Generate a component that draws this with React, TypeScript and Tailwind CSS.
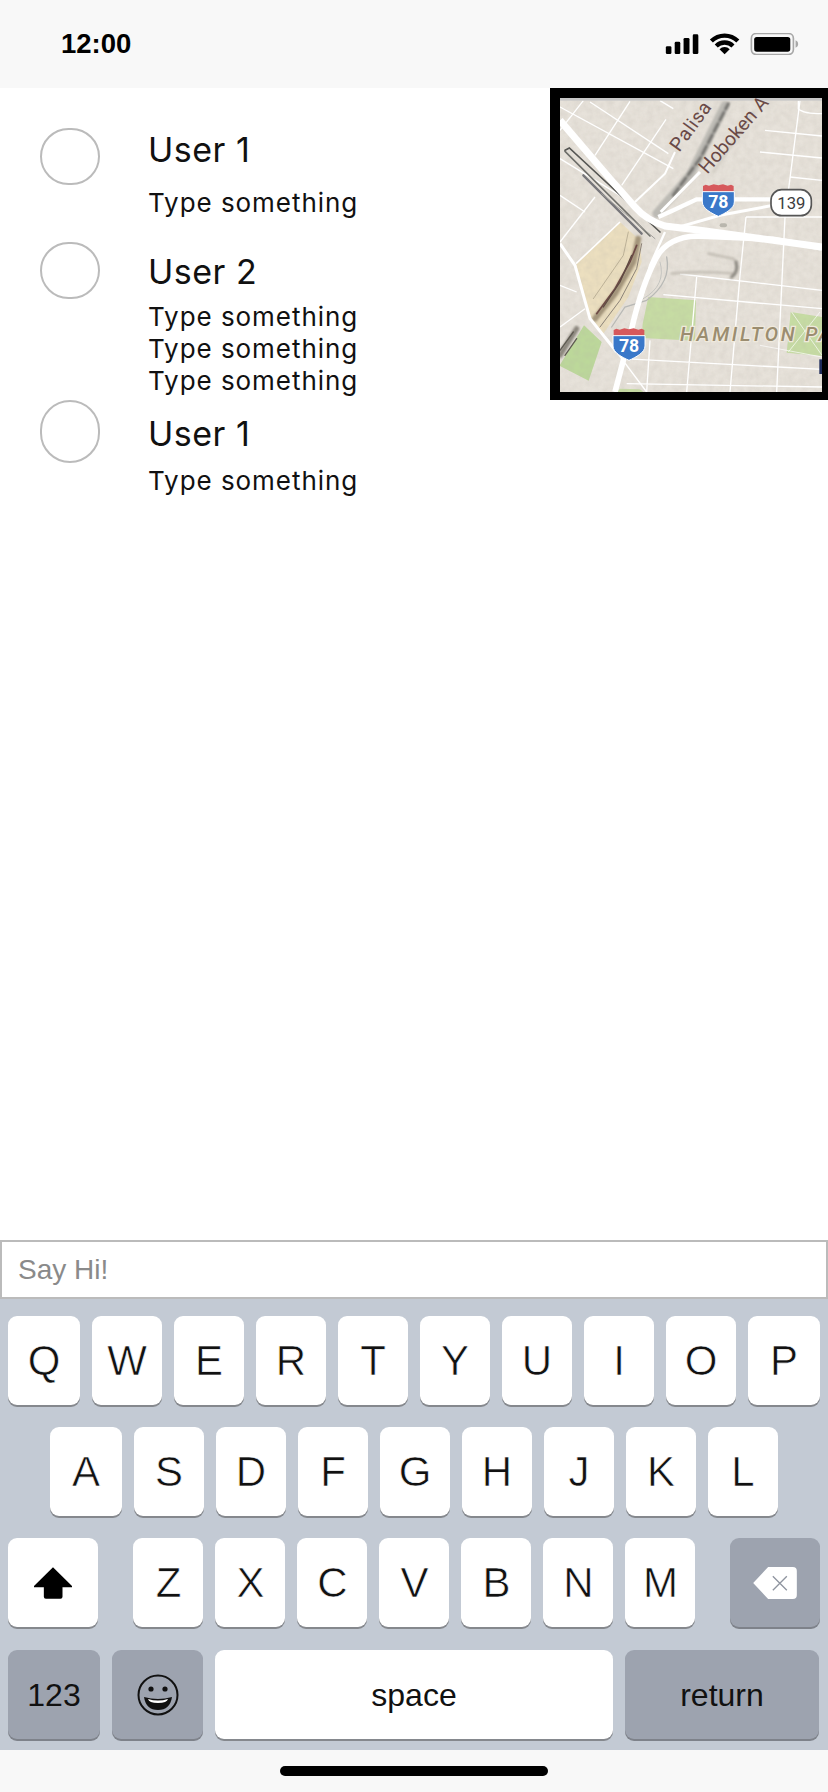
const sans = "font-['Liberation_Sans',Arial,sans-serif]";

const rows = [
  { name: "User 1", lines: 1, circle: "h-[57px]", pad: "pt-0", gap: "mt-[15px]", end: "h-[114px]" },
  { name: "User 2", lines: 3, circle: "h-[57px]", pad: "pt-[8px]", gap: "mt-[7px]", end: "h-[158px]" },
  { name: "User 1", lines: 1, circle: "h-[63px]", pad: "pt-[12px]", gap: "mt-[9px]", end: "h-[110px]" },
];

const StatusIcons = () => (
  <svg width="134" height="22" viewBox="373 98 403 67">
    <rect x="373" y="138" width="17" height="24" rx="4" fill="#000" />
    <rect x="400" y="125" width="17" height="37" rx="4" fill="#000" />
    <rect x="427" y="113" width="18" height="49" rx="4" fill="#000" />
    <rect x="455" y="102" width="17" height="60" rx="4" fill="#000" />
    <path d="M511.7 122.7A57 57 0 0 1 592.3 122.7" fill="none" stroke="#000" strokeWidth="13" />
    <path d="M526.5 137.5A36 36 0 0 1 577.5 137.5" fill="none" stroke="#000" strokeWidth="13" />
    <path d="M552 163L536.4 147.4A22 22 0 0 1 567.6 147.4Z" fill="#000" />
    <rect x="633.5" y="99.5" width="128" height="64" rx="15" fill="none" stroke="#a8a8a8" strokeWidth="5" />
    <rect x="642" y="110" width="110" height="45" rx="8" fill="#000" />
    <path d="M768 120C774 122 776 127 776 131.500C776 136 774 141 768 143Z" fill="#a8a8a8" />
  </svg>
);

const Shield = ({ x, y }: { x: number; y: number }) => (
  <g transform={`translate(${x} ${y})`}>
    <path d="M-46 -26L-46 -44L-38 -48L-28 -45L-14 -49L0 -46L14 -49L28 -45L38 -48L46 -44L46 -26Z" fill="#d6595c" />
    <path d="M-48 -27H48V4C48 24 20 38 0 47C-20 38 -48 24 -48 4Z" fill="#3a78c9" stroke="#fff" strokeWidth="3" />
    <text x="0" y="21" textAnchor="middle" fontSize="53" fontWeight="700" fill="#fff" fontFamily="Roboto, sans-serif">
      78
    </text>
  </g>
);

const MapArt = () => (
  <svg width="262" height="294" viewBox="60 298 786 882" className="block">
    <defs>
      <filter id="soft" x="-10%" y="-10%" width="120%" height="120%">
        <feGaussianBlur stdDeviation="3" />
      </filter>
      <filter id="soften" x="0" y="0" width="100%" height="100%">
        <feGaussianBlur stdDeviation="1.2" />
      </filter>
      <filter id="grain" x="0" y="0" width="100%" height="100%">
        <feTurbulence type="fractalNoise" baseFrequency="0.05" numOctaves="3" seed="4" />
        <feColorMatrix values="0 0 0 0 0.45 0 0 0 0 0.42 0 0 0 0 0.38 0 0 0 0.3 -0.08" />
      </filter>
    </defs>
    <rect x="60" y="298" width="786" height="882" fill="#e7e2da" />

    <g filter="url(#soften)">
      <path d="M108 795L240 670L300 725L305 790L265 895L190 1005L150 950Z" fill="#ecdfbf" />
      <path d="M325 895L468 905L465 1026L305 1018L308 975Z" fill="#c6dca3" />
      <path d="M752 940L846 955V1072L740 1062Z" fill="#c6dca3" />
      <path d="M60 1098L132 980L185 1030L146 1146L60 1102Z" fill="#bcd89a" />
      <path d="M240 1170L300 1172L310 1180H230Z" fill="#c6dca3" />
      <rect x="60" y="298" width="786" height="882" filter="url(#grain)" />

      <g fill="none" stroke="#fff" strokeWidth="4">
        <path d="M60 325L400 510M150 310L385 465M60 480L240 590M60 590L135 640" />
        <path d="M130 306L60 395M270 308L165 470M378 362L245 560M360 306L400 330" />
        <path d="M165 595L60 730" />
        <path d="M405 460L375 525L285 610" strokeWidth="6" />
        <path d="M675 395L846 412M660 460L846 478M750 535L846 545M775 306V330Q790 345 846 345" />
        <path d="M780 306L735 655L710 1180M618 655H846M618 655L600 830L570 1180" />
        <path d="M470 835L440 1180M420 826L846 875M370 888L846 930M330 1025L320 1180M250 1080L846 1112M260 1155L846 1165" />
        <path d="M60 985L135 930M60 860L110 880M200 1020L320 1180" />
        <path d="M660 1040L846 1075M755 940L846 1070M840 940L745 1060" strokeWidth="2" />
      </g>

      <g fill="none" strokeLinecap="round" filter="url(#soft)">
        <path d="M350 645L450 530L555 320" strokeWidth="26" stroke="#bcbab4" />
        <path d="M400 590L480 480L565 315" strokeWidth="10" stroke="#747370" strokeDasharray="26 12" />
        <path d="M640 340L520 520" strokeWidth="10" stroke="#d5d0c7" />
        <path d="M295 720L280 790L225 885L165 960" strokeWidth="18" stroke="#a3947a" />
        <path d="M60 1070L110 990" strokeWidth="16" stroke="#8c877e" />
        <path d="M395 825Q470 815 585 825Q600 800 580 780L505 765" strokeWidth="8" stroke="#c4bfb6" />
        <path d="M575 835Q596 820 588 790" strokeWidth="10" stroke="#8f8b84" />
      </g>

      <g fill="none" strokeLinecap="round">
        <path d="M75 455L88 448L360 700" strokeWidth="5" stroke="#565653" />
        <path d="M75 458L330 712" strokeWidth="5" stroke="#6f6f6b" />
        <path d="M130 530L305 705" strokeWidth="7" stroke="#77767a" />
        <path d="M185 585L345 720" strokeWidth="3" stroke="#a09f9b" />
        <path d="M290 740L270 790L225 870L170 945" strokeWidth="5" stroke="#6d4a45" />
        <path d="M275 770L240 850L190 925" strokeWidth="4" stroke="#5e4a42" />
        <path d="M305 735L290 810L240 905L180 985" strokeWidth="3" stroke="#8c8378" />
        <path d="M265 700L250 770L160 900" strokeWidth="2" stroke="#a69b84" />
        <path d="M380 775Q395 850 320 905L255 925L215 985" strokeWidth="4" stroke="#b8b9b6" />
        <path d="M360 790Q380 860 310 900" strokeWidth="3" stroke="#c4c4c0" />
        <path d="M60 1055L100 1000M75 1070L110 1020" strokeWidth="4" stroke="#5f5b52" />
        <path d="M545 680H555" strokeWidth="12" stroke="#b9b6ad" />
      </g>

      <g fill="none" stroke="#fff" strokeLinecap="butt">
        <path d="M60 365L210 540L285 625Q320 665 375 682L480 695L846 745" strokeWidth="21" />
        <path d="M225 1180L275 990Q305 860 350 775Q385 715 470 712L700 722L846 748" strokeWidth="17" />
        <path d="M355 655L400 635L470 602H700" strokeWidth="13" />
        <path d="M400 690L540 650L700 620" strokeWidth="9" />
        <path d="M362 640L480 520" strokeWidth="9" />
        <path d="M375 700L330 800L305 900" strokeWidth="7" />
        <path d="M60 735L105 800L150 960L230 1060" strokeWidth="9" />
        <path d="M108 795L240 670" strokeWidth="5" />
      </g>
    </g>
    <rect x="60" y="298" width="786" height="8" fill="#c8c8c8" />

    <text transform="translate(418 462) rotate(-54)" fontSize="58" letterSpacing="2" fill="#6a4a47" fontFamily="Roboto, sans-serif">
      Palisa
    </text>
    <text transform="translate(502 528) rotate(-49)" fontSize="58" fill="#6a4a47" fontFamily="Roboto, sans-serif">
      Hoboken A
    </text>
    <text
      x="420"
      y="1028"
      fontSize="60"
      fontStyle="italic"
      fontWeight="500"
      letterSpacing="8"
      fill="#9b8d70"
      stroke="#efe9dc"
      strokeWidth="8"
      paintOrder="stroke"
      fontFamily="Roboto, sans-serif"
    >
      HAMILTON PA
    </text>

    <Shield x={535} y={606} />
    <Shield x={267} y={1038} />
    <rect x="693" y="573" width="121" height="78" rx="32" fill="#fff" stroke="#555" strokeWidth="5" />
    <text x="754" y="630" textAnchor="middle" fontSize="50" fill="#3d3d3d" fontFamily="Roboto, sans-serif">
      139
    </text>
    <rect x="838" y="1082" width="8" height="44" fill="#1d2a5a" />
  </svg>
);

const Key = ({ label, width = "w-[70px]", dark = false, small = false, children }: {
  label?: string;
  width?: string;
  dark?: boolean;
  small?: boolean;
  children?: React.ReactNode;
}) => (
  <div
    className={`h-[89px] ${width} shrink-0 rounded-[9px] flex items-center justify-center ${
      dark ? "bg-[#9da3af] shadow-[0_2px_0_#7e828a]" : "bg-white shadow-[0_2px_0_#85888d]"
    } ${small ? "text-[32px] text-[#111]" : "text-[42px] text-[#111] [-webkit-text-stroke:0.6px_#fff]"}`}
  >
    {label}
    {children}
  </div>
);

const ShiftIcon = () => (
  <svg width="38" height="32" viewBox="103 145 112 93">
    <path d="M159 145L215 200V204H187V232Q187 238 181 238H138Q132 238 132 232V204H103V200Z" fill="#000" />
  </svg>
);

const DeleteIcon = () => (
  <svg width="44" height="32" viewBox="1017 142 131 96">
    <path d="M1062 142H1136Q1148 142 1148 154V226Q1148 238 1136 238H1062L1017 190Z" fill="#fff" />
    <path d="M1076 170L1118 212M1118 170L1076 212" stroke="#8f95a0" strokeWidth="4" />
  </svg>
);

const SmileIcon = () => (
  <svg width="42" height="42" viewBox="0 0 42 42">
    <circle cx="21" cy="21" r="19.500" fill="none" stroke="#111" strokeWidth="2" />
    <circle cx="14" cy="15" r="2.600" fill="#111" />
    <circle cx="28" cy="15" r="2.600" fill="#111" />
    <path d="M7 23Q21 27 35 23Q33 36 21 36Q9 36 7 23Z" fill="#111" />
    <path d="M11 25Q21 28 31 25Q30 29 21 29Q12 29 11 25Z" fill="#fff" />
  </svg>
);

const App = () => {
  return (
    <div className={`w-[828px] h-[1792px] flex flex-col bg-white overflow-hidden ${sans}`}>
      <div className="h-[88px] shrink-0 bg-[#f8f8f8] flex items-center justify-between pl-[61px] pr-[29px]">
        <span className="text-[27.500px] font-bold text-black">12:00</span>
        <StatusIcons />
      </div>

      <div className="flex justify-between items-start flex-1">
        <div className="pt-[40px] font-['Inter',sans-serif] text-[#111]">
          {rows.map((row, i) => (
            <div key={i} className={`flex items-start ${row.end} pl-[40px] gap-[48px]`}>
              <div className={`w-[60px] ${row.circle} rounded-full border-2 border-[#bbbbbb]`} />
              <div className={row.pad}>
                <p className="text-[34px] leading-[44px] tracking-[0.5px]">{row.name}</p>
                <div className={row.gap}>
                  {Array.from({ length: row.lines }).map((_, j) => (
                    <p key={j} className="text-[26px] leading-[32px] tracking-[0.95px]">Type something</p>
                  ))}
                </div>
              </div>
            </div>
          ))}
        </div>
        <div className="w-[278px] h-[312px] border-l-[10px] border-t-[10px] border-b-[8px] border-r-[6px] border-black overflow-hidden">
          <MapArt />
        </div>
      </div>

      <div className="h-[59px] shrink-0 border-2 border-[#bbbbbb] bg-white flex items-center pl-[16px] text-[28px] text-[#8a8a8a]">
        Say Hi!
      </div>

      <div className="h-[451px] shrink-0 bg-[#c3cad4] pt-[17px] px-[8px] flex flex-col gap-[22px]">
        <div className="flex gap-[12px]">
          <Key label="Q" width="w-[72px]" />
          {"WERTYUIO".split("").map((k) => (
            <Key key={k} label={k} />
          ))}
          <Key label="P" width="w-[72px]" />
        </div>
        <div className="flex gap-[12px] pl-[42px]">
          <Key label="A" width="w-[72px]" />
          {"SDFGHJKL".split("").map((k) => (
            <Key key={k} label={k} />
          ))}
        </div>
        <div className="flex gap-[12px]">
          <Key width="w-[90px]">
            <ShiftIcon />
          </Key>
          <div className="w-[24px]" />
          {"ZXCVBNM".split("").map((k) => (
            <Key key={k} label={k} />
          ))}
          <div className="w-[22px]" />
          <Key width="w-[90px]" dark>
            <DeleteIcon />
          </Key>
        </div>
        <div className="flex gap-[12px] mt-[1px]">
          <Key label="123" width="w-[92px]" dark small />
          <Key width="w-[91px]" dark>
            <SmileIcon />
          </Key>
          <Key label="space" width="w-[398px]" small />
          <Key label="return" width="w-[194px]" dark small />
        </div>
      </div>

      <div className="h-[42px] shrink-0 bg-[#f8f8f8] flex justify-center pt-[16px]">
        <div className="w-[268px] h-[10px] rounded-[5px] bg-black" />
      </div>
    </div>
  );
};

export default App;
